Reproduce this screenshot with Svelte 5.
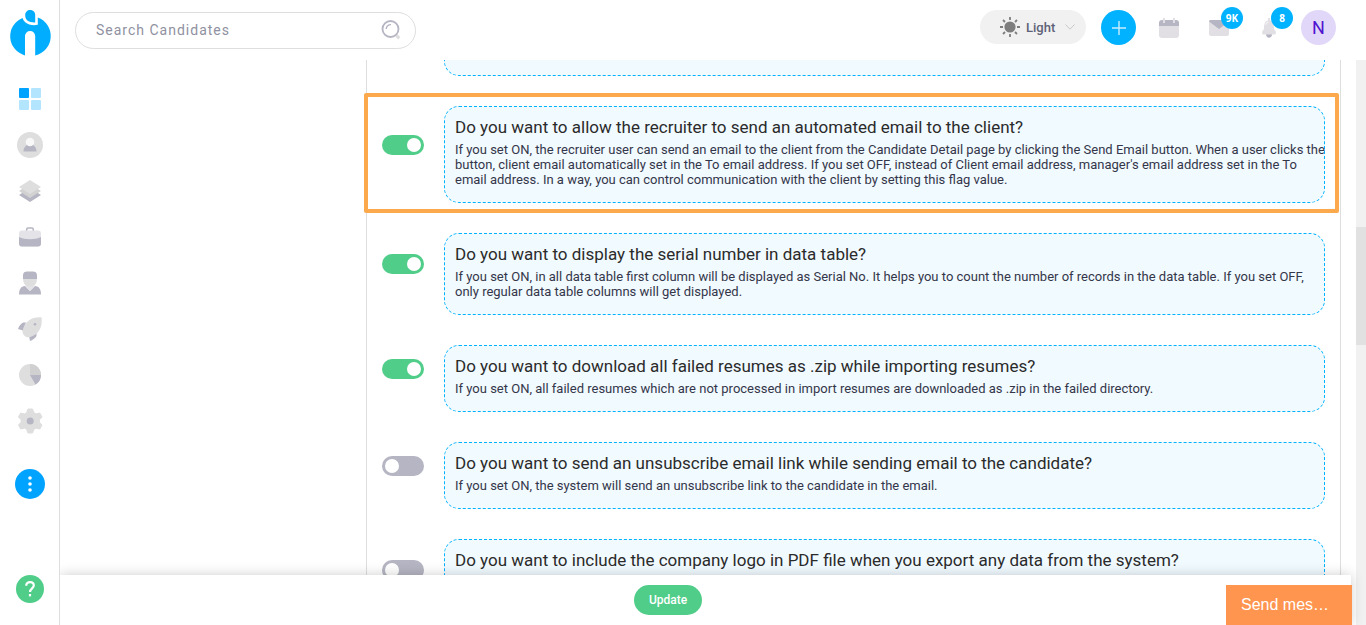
<script lang="ts">
	import { onMount } from 'svelte'

	let scroller: HTMLElement
	let theme = $state('Light')
	let search = $state('')

	let settings = $state([
		{
			id: 'interview',
			title: 'Do you want to allow the recruiter to schedule an interview?',
			text: 'If you set ON, the recruiter user can schedule an interview.',
			on: true,
			marked: false
		},
		{
			id: 'client-email',
			title: 'Do you want to allow the recruiter to send an automated email to the client?',
			text: "If you set ON, the recruiter user can send an email to the client from the Candidate Detail page by clicking the Send Email button. When a user clicks the button, client email automatically set in the To email address. If you set OFF, instead of Client email address, manager's email address set in the To email address. In a way, you can control communication with the client by setting this flag value.",
			on: true,
			marked: true
		},
		{
			id: 'serial',
			title: 'Do you want to display the serial number in data table?',
			text: 'If you set ON, in all data table first column will be displayed as Serial No. It helps you to count the number of records in the data table. If you set OFF, only regular data table columns will get displayed.',
			on: true,
			marked: false
		},
		{
			id: 'failed-zip',
			title: 'Do you want to download all failed resumes as .zip while importing resumes?',
			text: 'If you set ON, all failed resumes which are not processed in import resumes are downloaded as .zip in the failed directory.',
			on: true,
			marked: false
		},
		{
			id: 'unsubscribe',
			title: 'Do you want to send an unsubscribe email link while sending email to the candidate?',
			text: 'If you set ON, the system will send an unsubscribe link to the candidate in the email.',
			on: false,
			marked: false
		},
		{
			id: 'pdf-logo',
			title: 'Do you want to include the company logo in PDF file when you export any data from the system?',
			text: 'If you set ON, the company logo will be displayed in the header of every PDF file which is exported from the system. If you set OFF, the PDF file will be exported without the company logo.',
			on: false,
			marked: false
		}
	])

	onMount(() => {
		scroller.scrollTop = 51
	})
</script>

<div class="app">
	<aside>
		<a class="logo" href="#home" aria-label="Home">
			<svg width="40" height="46" viewBox="0 0 40 46">
				<path fill="#00adff" d="M12.500 7.900A19.800 19.800 0 0 0 15 45.400V26a5.100 5.100 0 0 1 10.200 0v19.400A19.800 19.800 0 0 0 27.800 7.500V14.800c-4.500.8-9.500.2-12.600-2.600a8 8 0 0 1-2.700-4.300z" />
				<path fill="#00adff" d="M20 0c2.800 0 5.200 1.800 5.200 5v7.500c-6 .2-10-2.200-10-7.200C15.200 2 17.500 0 20 0z" />
			</svg>
		</a>
		<nav>
			<a href="#dashboard" aria-label="Dashboard">
				<svg width="22" height="22" viewBox="0 0 22 22">
					<rect width="10" height="10" rx="1" fill="#00a3ff" />
					<rect x="12" width="10" height="10" rx="1" fill="#b3e5ff" />
					<rect y="12" width="10" height="10" rx="1" fill="#b3e5ff" />
					<rect x="12" y="12" width="10" height="10" rx="1" fill="#b3e5ff" />
				</svg>
			</a>
			<a href="#candidates" aria-label="Candidates">
				<svg width="26" height="26" viewBox="0 0 26 26">
					<circle cx="13" cy="13" r="13" fill="#dedede" />
					<path d="M6.500 19.500c0-3.500 2-7 6.500-7s6.500 3.500 6.500 7z" fill="#b5b5c3" />
					<circle cx="13" cy="10" r="4.300" fill="#f8f8f8" />
				</svg>
			</a>
			<a href="#jobs" aria-label="Jobs">
				<svg width="22" height="22" viewBox="0 0 22 22">
					<path d="M0 15l11-7 11 7-11 7z" fill="#b5b5c3" />
					<path d="M0 11l11-7 11 7-11 7z" fill="#d2d2d2" />
					<path d="M0 7l11-7 11 7-11 7z" fill="#dedede" />
				</svg>
			</a>
			<a href="#clients" aria-label="Clients">
				<svg width="22" height="20" viewBox="0 0 22 20">
					<path d="M7.700 4V2.500c0-1 .6-1.500 1.400-1.500h3.800c.8 0 1.400.5 1.400 1.500V4" fill="none" stroke="#b5b5c3" stroke-width="1.600" />
					<rect y="3.500" width="22" height="16" rx="3" fill="#e3e3e8" />
					<path d="M0 10c6 3 16 3 22 0v6.500a3 3 0 0 1-3 3H3a3 3 0 0 1-3-3z" fill="#b5b5c3" />
				</svg>
			</a>
			<a href="#users" aria-label="Users">
				<svg width="22" height="24" viewBox="0 0 22 24">
					<path d="M0 23.500c0-5 2-8.500 6-8.500l5 5 5-5c4 0 6 3.500 6 8.500z" fill="#b5b5c3" />
					<path d="M6 14.500h10l-5 5.500z" fill="#e3e3e8" />
					<path d="M4 7h14c0 5-2 8.500-7 8.500S4 12 4 7z" fill="#dedede" />
					<path d="M4 8V4c0-2.500 2-3.500 4-3.500h6c2 0 4 1 4 3.500v4z" fill="#b5b5c3" />
				</svg>
			</a>
			<a href="#campaigns" aria-label="Campaigns">
				<svg width="24" height="24" viewBox="0 0 24 24">
					<path d="M8 5.500H5.200C3 6.500 1 9 0 12l5 1.500zM18.500 15.500v3.500c-1.500 2.500-4 4-6.500 5l-1-5z" fill="#b5b5c3" />
					<path d="M23.500.3C15-.5 7 3 4.500 14c-.5 3 3 7 7 6.200C20.500 18 25 10 23.500.3z" fill="#dedede" />
					<circle cx="17" cy="7.200" r="1.300" fill="#b5b5c3" />
				</svg>
			</a>
			<a href="#reports" aria-label="Reports">
				<svg width="22" height="22" viewBox="0 0 22 22">
					<circle cx="11" cy="11" r="11" fill="#dedede" />
					<path d="M11 11V0a11 11 0 0 1 11 11z" fill="#d0d0d0" />
					<path d="M11 11h11a11 11 0 0 1-5.500 9.500z" fill="#b5b5c3" />
				</svg>
			</a>
			<a href="#settings" aria-label="Settings">
				<svg width="24" height="24" viewBox="0 0 24 24">
					<path d="M10 0h4.500l1.300 3.600 2.200 1.300 3.800-.9 2.200 4-2.600 2.800v2.400l2.600 2.800-2.200 4-3.800-.9-2.200 1.300-1.300 3.600H10l-1.300-3.600-2.200-1.300-3.800.9-2.200-4 2.600-2.800v-2.400L.5 8l2.200-4 3.800.9 2.200-1.300z" fill="#dedede" stroke="#dedede" stroke-linejoin="round" />
					<circle cx="12.200" cy="12" r="3.500" fill="#b5b5c3" />
				</svg>
			</a>
		</nav>
		<button class="more" aria-label="More">
			<svg width="4" height="16" viewBox="0 0 4 16" fill="#fff">
				<circle cx="2" cy="2" r="1.800" /><circle cx="2" cy="8" r="1.800" /><circle cx="2" cy="14" r="1.800" />
			</svg>
		</button>
		<button class="help" aria-label="Help">
			<svg width="10" height="16" viewBox="0 0 10 16" fill="none" stroke="#fff" stroke-width="2.200">
				<path d="M1.200 4.800C1.200 2.500 2.800 1.200 5 1.200s3.800 1.300 3.800 3.400C8.800 7.200 5 7.600 5 11" />
				<path d="M5 13v2.400" />
			</svg>
		</button>
	</aside>

	<div class="page">
		<header>
			<label class="search">
				<input type="text" placeholder="Search Candidates" aria-label="Search Candidates" bind:value={search} />
				<svg width="20" height="20" viewBox="0 0 20 20" fill="none">
					<path d="M15.500 15.500l2.800 2.800" stroke="#dedede" stroke-width="3.200" />
					<circle cx="9.500" cy="9" r="8" stroke="#b5b5c3" stroke-width="1.800" />
					<path d="M5.200 9A4.500 4.500 0 0 1 10 4.600" stroke="#b5b5c3" stroke-width="1.400" />
				</svg>
			</label>
			<div class="tools">
				<label class="theme">
					<svg width="20" height="20" viewBox="0 0 20 20" stroke="#7e7e7e" stroke-width="1.800">
						<circle cx="10" cy="10" r="4.700" fill="#7e7e7e" />
						<path d="M10 0v3M10 17v3M0 10h3M17 10h3M3 3l2 2M15 15l2 2M3 17l2-2M15 5l2-2" />
					</svg>
					<select bind:value={theme} aria-label="Theme">
						<option>Light</option>
						<option>Dark</option>
					</select>
					<svg width="10" height="6" viewBox="0 0 10 6" fill="none" stroke="#c9c9c9">
						<path d="M.5.5L5 5.200 9.500.5" />
					</svg>
				</label>
				<button class="round add" aria-label="Add">
					<svg width="14" height="14" viewBox="0 0 14 14" stroke="#c8edff" stroke-width="1.400">
						<path d="M7 0v14M0 7h14" />
					</svg>
				</button>
				<button class="round" aria-label="Calendar">
					<svg width="20" height="20" viewBox="0 0 20 20">
						<path d="M0 8h20v9a3 3 0 0 1-3 3H3a3 3 0 0 1-3-3z" fill="#e1dfe3" />
						<path d="M0 8V5a3 3 0 0 1 3-3h14a3 3 0 0 1 3 3v3z" fill="#b5b5c3" />
						<path d="M5 0v5M15 0v5" stroke="#e1dfe3" stroke-width="2" />
					</svg>
				</button>
				<button class="round" aria-label="Mail">
					<svg width="20" height="16" viewBox="0 0 20 16">
						<rect width="20" height="16" rx="2" fill="#e1dfe3" />
						<path d="M0 1.500C0 .5 1 0 2 0h16c1 0 2 .5 2 1.500L10 9z" fill="#b5b5c3" />
					</svg>
					<span class="badge">9K</span>
				</button>
				<button class="round" aria-label="Notifications">
					<svg width="14" height="20" viewBox="0 0 14 20">
						<path d="M4 16h6c0 5-6 5-6 0z" fill="#b5b5c3" />
						<path d="M6 0h2v2.500c3 .5 4 3 4 8.500l1.500 2c.8 1 .3 3.500-.7 3.500H1.200c-1 0-1.500-2.500-.7-3.500L2 11c0-5.500 1-8 4-8.500z" fill="#e1dfe3" />
						<path d="M4 6.500c.3-1.500 1-2.300 2.500-2.300" stroke="#fff" fill="none" />
					</svg>
					<span class="badge">8</span>
				</button>
				<button class="round avatar">N</button>
			</div>
		</header>

		<div class="body">
			<main>
				<div class="scroller" bind:this={scroller}>
					<section class="panel">
						{#each settings as item (item.id)}
							<div class="row" class:marked={item.marked}>
								<input type="checkbox" id={item.id} bind:checked={item.on} />
								<div class="card">
									<label for={item.id}>{item.title}</label>
									<p>{item.text}</p>
								</div>
							</div>
						{/each}
					</section>
				</div>
				<footer>
					<button class="update">Update</button>
				</footer>
			</main>
			<div class="track"><div class="thumb"></div></div>
			<button class="chat">Send mes…</button>
		</div>
	</div>
</div>

<style>
	:global(body) {
		margin: 0;
		font-family: Roboto, 'Liberation Sans', sans-serif;
		color: #3f4254;
	}

	button, input, select {
		font-family: inherit;
		border: none;
		margin: 0;
		padding: 0;
	}

	button { cursor: pointer; }
	svg { display: block; flex: none; overflow: visible; }

	.app {
		display: flex;
		height: 100vh;
		background: #fff;
	}

	aside {
		position: relative;
		z-index: 1;
		width: 59px;
		flex: none;
		display: flex;
		flex-direction: column;
		align-items: center;
		padding: 10px 0 22px;
		border-right: 1px solid #dedede;
		background: #fff;
	}

	nav {
		display: flex;
		flex-direction: column;
		margin: 20px 0 25px;
	}

	nav a {
		width: 46px;
		height: 46px;
		display: flex;
		align-items: center;
		justify-content: center;
	}

	.more, .help {
		display: flex;
		align-items: center;
		justify-content: center;
		border-radius: 50%;
	}

	.more {
		width: 30px;
		height: 30px;
		background: #00a3ff;
	}

	.help {
		width: 28px;
		height: 28px;
		margin-top: auto;
		background: #50cd89;
	}

	.page {
		flex: 1;
		min-width: 0;
		display: flex;
		flex-direction: column;
	}

	header {
		height: 60px;
		flex: none;
		box-sizing: border-box;
		padding: 10px 30px 10px 15px;
		display: flex;
		justify-content: space-between;
		align-items: flex-start;
	}

	.search {
		width: 341px;
		height: 37px;
		margin-top: 2px;
		padding: 0 14px 2px 20px;
		box-sizing: border-box;
		border: 1px solid #dedede;
		border-radius: 20px;
		display: flex;
		align-items: center;
	}

	.search input {
		flex: 1;
		min-width: 0;
		background: none;
		font-size: 14px;
		letter-spacing: 1px;
		outline: none;
	}

	.search input::placeholder { color: #8f91a1; }

	.tools {
		display: flex;
		gap: 15px;
	}

	.theme {
		height: 34px;
		padding: 0 11px 0 20px;
		border-radius: 17px;
		background: #f1f1f1;
		display: flex;
		align-items: center;
		gap: 6px;
	}

	.theme select {
		appearance: none;
		width: 33px;
		background: none;
		color: #5e6278;
		font-size: 13px;
		font-weight: 500;
	}

	.round {
		position: relative;
		width: 35px;
		height: 35px;
		border-radius: 50%;
		background: none;
		display: flex;
		align-items: center;
		justify-content: center;
	}

	.add { background: #00b2ff; }

	.avatar {
		background: #e1d8f9;
		color: #5014d0;
		font-size: 18px;
	}

	.badge {
		position: absolute;
		top: -3px;
		right: -7px;
		width: 22px;
		height: 22px;
		border-radius: 50%;
		background: #00b2ff;
		color: #fff;
		font-family: 'Noto Sans', sans-serif;
		font-size: 10px;
		font-weight: 700;
		line-height: 22px;
		text-align: center;
	}

	.body {
		position: relative;
		flex: 1;
		min-height: 0;
		display: flex;
	}

	main {
		flex: 1;
		min-width: 0;
		display: flex;
		flex-direction: column;
	}

	.scroller {
		flex: 1;
		min-height: 0;
		overflow-y: auto;
		scrollbar-width: none;
		padding: 0 15px 0 306px;
	}

	.panel {
		border: solid #dedede;
		border-width: 0 1px;
		padding: 0 15px;
		display: flex;
		flex-direction: column;
		gap: 30px;
	}

	.row {
		position: relative;
		display: flex;
		align-items: center;
		gap: 20px;
	}

	.marked::before {
		content: '';
		position: absolute;
		inset: -13px -14px -10px -18px;
		border: 4px solid #fba94c;
		border-radius: 2px;
		pointer-events: none;
	}

	.row input {
		appearance: none;
		flex: none;
		width: 42px;
		height: 20px;
		margin-bottom: 20px;
		padding: 3px;
		box-sizing: border-box;
		border-radius: 10px;
		background: #b5b5c3;
		display: flex;
	}

	.row input::before {
		content: '';
		width: 14px;
		height: 14px;
		border-radius: 50%;
		background: #fff;
	}

	.row input:checked {
		background: #50cd89;
		justify-content: flex-end;
	}

	.card {
		flex: 1;
		padding: 10px 0 15px 10px;
		border: 1px dashed #00b2ff;
		border-radius: 15px;
		background: #f1faff;
	}

	.card label {
		display: block;
		font-size: 17px;
		line-height: 20px;
		color: #2b2b2b;
	}

	.card p {
		margin: 5px -4px 0 0;
		font-size: 13px;
		line-height: 15px;
		color: #34364a;
	}

	footer {
		position: relative;
		height: 50px;
		flex: none;
		margin-right: 5px;
		padding: 10px 75px 0 0;
		box-sizing: border-box;
		background: #fff;
		box-shadow: 0 0 12px rgba(0, 0, 0, 0.2);
		text-align: center;
	}

	.update {
		width: 68px;
		height: 30px;
		border-radius: 15px;
		background: #50cd89;
		color: #fff;
		font-size: 12px;
		font-weight: 500;
	}

	.track {
		display: flow-root;
		width: 10px;
		flex: none;
		background: #f1f1f1;
	}

	.thumb {
		height: 118px;
		margin-top: 167px;
		background: #e1e1e1;
	}

	.chat {
		position: absolute;
		right: 14px;
		bottom: 0;
		width: 126px;
		height: 40px;
		padding-left: 15px;
		background: #ff954f;
		color: #fff;
		font-family: 'Liberation Sans', Arial, sans-serif;
		font-size: 16px;
		text-align: left;
	}
</style>
